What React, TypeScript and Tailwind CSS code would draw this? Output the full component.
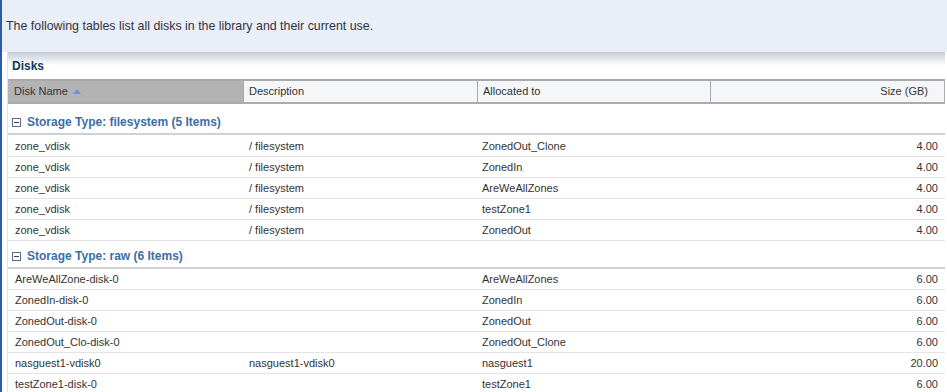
const fsRows = [
  { name: "zone_vdisk", desc: "/ filesystem", alloc: "ZonedOut_Clone", size: "4.00" },
  { name: "zone_vdisk", desc: "/ filesystem", alloc: "ZonedIn", size: "4.00" },
  { name: "zone_vdisk", desc: "/ filesystem", alloc: "AreWeAllZones", size: "4.00" },
  { name: "zone_vdisk", desc: "/ filesystem", alloc: "testZone1", size: "4.00" },
  { name: "zone_vdisk", desc: "/ filesystem", alloc: "ZonedOut", size: "4.00" },
];

const rawRows = [
  { name: "AreWeAllZone-disk-0", desc: "", alloc: "AreWeAllZones", size: "6.00" },
  { name: "ZonedIn-disk-0", desc: "", alloc: "ZonedIn", size: "6.00" },
  { name: "ZonedOut-disk-0", desc: "", alloc: "ZonedOut", size: "6.00" },
  { name: "ZonedOut_Clo-disk-0", desc: "", alloc: "ZonedOut_Clone", size: "6.00" },
  { name: "nasguest1-vdisk0", desc: "nasguest1-vdisk0", alloc: "nasguest1", size: "20.00" },
  { name: "testZone1-disk-0", desc: "", alloc: "testZone1", size: "6.00" },
];

type Row = { name: string; desc: string; alloc: string; size: string };

function GroupHeader({ label }: { label: string }) {
  return (
    <div className="flex h-[24px] items-center border-b-2 border-[#cfd0d8] pl-[4px]">
      <span className="mr-[6px] flex h-[9px] w-[9px] items-center justify-center border border-[#5b6f8c] bg-white">
        <span className="block h-px w-[5px] bg-[#2d4466]" />
      </span>
      <span className="text-[12px] font-bold text-[#3b6ea6]">{label}</span>
    </div>
  );
}

function DataRow({ row }: { row: Row }) {
  return (
    <div className="grid h-[21px] grid-cols-[235px_234px_233px_1fr] items-center border-b border-[#e4e4e4] text-[#333333]">
      <div className="pl-[7px]">{row.name}</div>
      <div className="pl-[6px]">{row.desc}</div>
      <div className="pl-[5px]">{row.alloc}</div>
      <div className="pr-[7px] text-right">{row.size}</div>
    </div>
  );
}

export default function App() {
  return (
    <div
      className="h-[392px] w-[947px] overflow-hidden border-l-2 border-[#2c5aa6] bg-white text-[11px]"
      style={{ fontFamily: '"Liberation Sans", Arial, sans-serif' }}
    >
      {/* intro band */}
      <div className="flex h-[52px] items-center bg-[#eaeef6] pl-[4px] text-[12.4px] text-[#333344]">
        The following tables list all disks in the library and their current use.
      </div>

      <div className="pl-[5px] pr-[2px]">
        <div className="border-l border-[#e2e4ea]">
          {/* panel title */}
          <div className="flex h-[27px] items-end bg-gradient-to-b from-[#c6ccd6] via-white to-white pb-[4px] pl-[4px]">
            <span className="text-[12px] font-bold text-[#0c3a5c]">Disks</span>
          </div>

          {/* column headers */}
          <div className="grid h-[25px] grid-cols-[235px_234px_233px_1fr] border-y-2 border-[#a9a9ae] text-[#333333]">
            <div className="flex items-center bg-[#b3b3b3] pl-[6px]">
              Disk Name
              <svg width="8" height="5" viewBox="0 0 8 5" className="ml-[5px]">
                <path d="M0 5 L4 0 L8 5 Z" fill="#6a93d0" />
              </svg>
            </div>
            <div className="flex items-center border-l border-[#a9a9ae] bg-[#f5f6f8] pl-[5px]">Description</div>
            <div className="flex items-center border-l border-[#a9a9ae] bg-[#f5f6f8] pl-[5px]">Allocated to</div>
            <div className="flex items-center justify-end border-x border-[#a9a9ae] bg-[#f5f6f8] pr-[16px]">Size (GB)</div>
          </div>

          <div className="h-[7px]" />
          <GroupHeader label="Storage Type: filesystem (5 Items)" />
          <div className="h-px" />
          {fsRows.map((r, i) => (
            <DataRow key={i} row={r} />
          ))}

          <div className="h-[4px]" />
          <GroupHeader label="Storage Type: raw (6 Items)" />
          {rawRows.map((r, i) => (
            <DataRow key={i} row={r} />
          ))}
        </div>
      </div>
    </div>
  );
}
